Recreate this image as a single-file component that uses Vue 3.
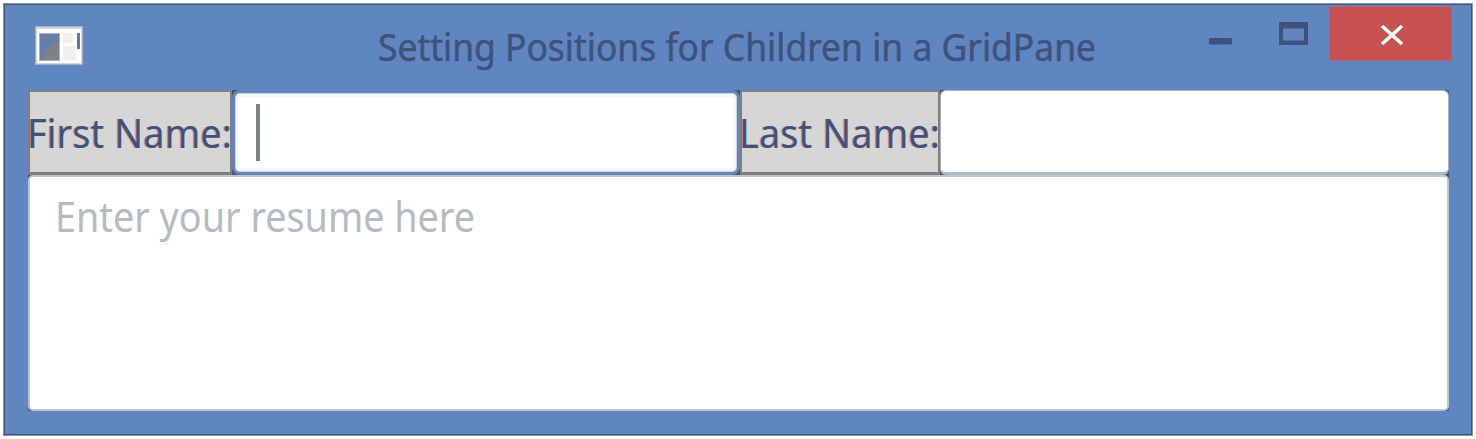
<script setup>
import { ref } from 'vue'

const firstName = ref('')
const lastName = ref('')
</script>

<template>
  <main class="window">
    <header class="titlebar">
      <svg class="app-icon" width="50" height="42" viewBox="0 0 50 42">
        <rect x="1" y="1" width="48" height="39" fill="#a5afbd" />
        <rect x="2" y="2" width="46" height="37" fill="#d6d7d5" />
        <rect x="3" y="4" width="44" height="34" fill="#fff" />
        <rect x="5" y="8" width="21" height="28" fill="#a9b3c2" />
        <rect x="6" y="9" width="19" height="26" fill="#637fac" />
        <path d="M9 35V27L17 20L25 17V35Z" fill="#7d8288" />
        <path d="M29 8h10v10h-10zM29 21h13v14h-13z" fill="#efefee" />
        <rect x="43" y="8" width="3" height="16" fill="#63779d" />
      </svg>
      <svg class="title" width="720" height="60" viewBox="0 0 720 60">
        <text x="0" y="45" textLength="718" lengthAdjust="spacingAndGlyphs">Setting Positions for Children in a GridPane</text>
      </svg>
      <div class="controls">
        <svg width="150" height="60" viewBox="0 0 150 60">
          <rect x="30" y="34" width="23" height="6.500" rx="1.500" fill="#40527b" />
          <path fill-rule="evenodd" d="M100 18h29v23h-29zM104 24.500v12h21v-12z" fill="#40527b" />
        </svg>
        <button class="close" aria-label="Close">
          <svg width="24" height="22" viewBox="0 0 24 22">
            <path d="M2 2L22 20M22 2L2 20" stroke="#fff" stroke-width="3.600" />
          </svg>
        </button>
      </div>
    </header>

    <section class="grid">
      <div class="label">
        <svg width="204" height="80" viewBox="0 0 204 80">
          <text class="fringe" x="-2" y="55" textLength="205" lengthAdjust="spacingAndGlyphs">First Name:</text>
          <text x="-1" y="55" textLength="205" lengthAdjust="spacingAndGlyphs">First Name:</text>
        </svg>
      </div>
      <div class="field focused">
        <span class="caret"></span>{{ firstName }}
      </div>
      <div class="label">
        <svg width="200" height="80" viewBox="0 0 200 80">
          <text class="fringe" x="-2" y="55" textLength="201" lengthAdjust="spacingAndGlyphs">Last Name:</text>
          <text x="-1" y="55" textLength="201" lengthAdjust="spacingAndGlyphs">Last Name:</text>
        </svg>
      </div>
      <div class="field">{{ lastName }}</div>
      <div class="resume">
        <svg width="440" height="80" viewBox="0 0 440 80">
          <text x="2" y="54.500" textLength="420" lengthAdjust="spacingAndGlyphs">Enter your resume here</text>
        </svg>
      </div>
    </section>
  </main>
</template>

<style>
body {
  background: #fff;
}
</style>

<style scoped>
* {
  box-sizing: border-box;
}

.window {
  width: 1470px;
  height: 433px;
  margin: 3px 0 0 3px;
  border: 1px solid #8796b5;
  background: #5f86c0;
  box-shadow: inset 0 0 0 1px #40527b;
  font-family: "Noto Sans", "Open Sans", sans-serif;
  display: flex;
  flex-direction: column;
}

.titlebar {
  height: 86px;
  flex: none;
  display: flex;
  align-items: flex-start;
  padding-left: 30px;
}

.app-icon {
  flex: none;
  margin-top: 21px;
}

.title {
  flex: none;
  margin: 12px 0 0 294px;
  overflow: visible;
  font-size: 39px;
  fill: #40527b;
  stroke: #40527b;
  stroke-width: 0.5px;
}

.controls {
  display: flex;
  margin-left: 81px;
}

.close {
  width: 123px;
  height: 55px;
  margin: 2px 0 0;
  border: 1px solid #a8696d;
  padding: 3px 0 0 2px;
  background: #c75150;
  display: flex;
  align-items: center;
  justify-content: center;
}

.grid {
  display: grid;
  width: 1421px;
  grid-template-columns: 204px 508px 200px 509px;
  grid-template-rows: 85px 236px;
  margin-left: 24px;
  border-radius: 2px;
  background: #40527b;
}

.label {
  background: #d6d7d5;
  border: 3px solid #7f7f7f;
  border-top-width: 2px;
  border-left-width: 2px;
  border-right-width: 2px;
}

.label svg {
  display: block;
  margin: 1px 0 0 -2px;
  overflow: visible;
  font-size: 40px;
  fill: #40527b;
}

.label .fringe {
  fill: #c75150;
  opacity: 0.55;
}

.field {
  background: #fff;
  border: 1px solid #a9b4c0;
  border-bottom: 3px solid #afb9c3;
  border-radius: 6px;
  display: flex;
}

.field.focused {
  border: 3px solid #5f86c0;
  border-radius: 8px;
  box-shadow: inset 0 0 0 1px #c9d2df, inset 0 0 0 4px #f7f7f7;
}

.caret {
  width: 4px;
  height: 57px;
  margin: 11px 0 0 21px;
  background: #7a828c;
}

.resume {
  grid-column: 1 / -1;
  background: #fff;
  border: 2px solid #bfc5ca;
  border-radius: 5px;
  padding-left: 23px;
}

.resume svg {
  display: block;
  overflow: visible;
  font-size: 41px;
  fill: #b4bbc1;
}
</style>
